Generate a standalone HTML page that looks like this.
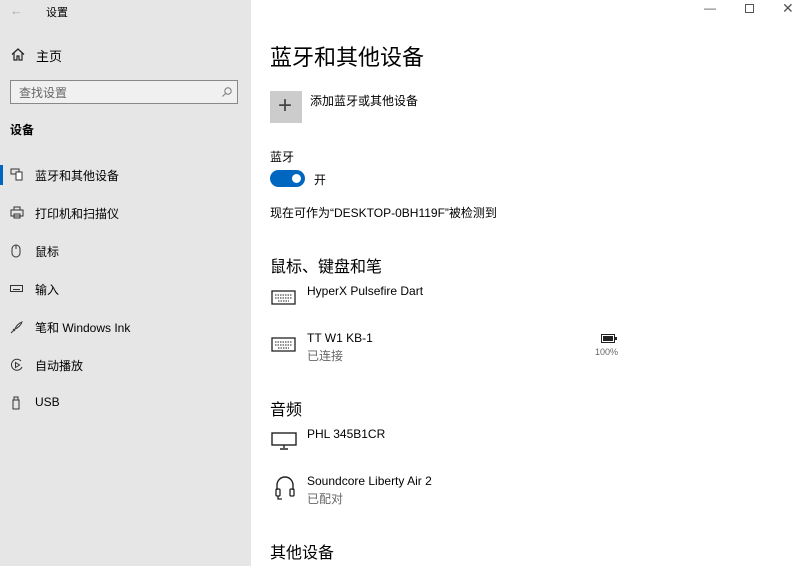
<!DOCTYPE html>
<html><head><meta charset="utf-8"><style>
*{margin:0;padding:0;box-sizing:border-box}
body{width:800px;height:566px;overflow:hidden;background:#fff;font-family:"Liberation Sans","Noto Sans CJK SC",sans-serif;color:#000;position:relative}
.side{position:absolute;left:0;top:0;width:251px;height:566px;background:#e6e6e6}
.a{position:absolute;white-space:nowrap}
.s{font-size:12px}
.m{font-size:12px}
.g{color:#666}
svg{position:absolute}
</style></head><body>
<div class="side">
 <div class="a" style="left:10px;top:3px;font-size:13px;color:#aaa">←</div>
 <div class="a s" style="left:46px;top:4px;font-size:11px">设置</div>
 <svg style="left:11px;top:48px" width="14" height="13" viewBox="0 0 14 13"><path d="M1 6.5L7 1l6 5.5M3 5v7h3V8h2v4h3V5" fill="none" stroke="#222" stroke-width="1.2"/></svg>
 <div class="a s" style="left:36px;top:46px;font-size:13px">主页</div>
 <div class="a" style="left:10px;top:80px;width:228px;height:24px;border:1px solid #888;background:#f0f0f0"></div>
 <div class="a s" style="left:19px;top:84px;color:#666">查找设置</div>
 <svg style="left:221px;top:86px" width="12" height="12" viewBox="0 0 12 12"><circle cx="7" cy="5" r="3.2" fill="none" stroke="#777"/><path d="M4.8 7.2L1.5 10.5" stroke="#777"/></svg>
 <div class="a" style="left:10px;top:121px;font-size:12px;font-weight:bold">设备</div>
 <div class="a" style="left:0;top:165px;width:3px;height:20px;background:#0067c0"></div>
 <svg style="left:10px;top:168px" width="14" height="13" viewBox="0 0 14 13"><rect x="1" y="1" width="8" height="5" fill="none" stroke="#333"/><rect x="6" y="4" width="6" height="8" fill="#fff" stroke="#333"/></svg>
 <div class="a s" style="left:35px;top:167px">蓝牙和其他设备</div>
 <svg style="left:10px;top:206px" width="14" height="13" viewBox="0 0 14 13"><path d="M4 4V1h6v3M1 4h12v6H1zM4 8h6v4H4z" fill="none" stroke="#333"/></svg>
 <div class="a s" style="left:35px;top:205px">打印机和扫描仪</div>
 <svg style="left:11px;top:244px" width="10" height="14" viewBox="0 0 10 14"><rect x="1" y="1" width="8" height="12" rx="4" fill="none" stroke="#333"/><path d="M5 1v4" stroke="#333"/></svg>
 <div class="a s" style="left:35px;top:243px">鼠标</div>
 <svg style="left:10px;top:285px" width="13" height="7" viewBox="0 0 13 7"><rect x=".5" y=".5" width="12" height="6" fill="none" stroke="#333"/><path d="M3 4.5h7" stroke="#333"/></svg>
 <div class="a s" style="left:35px;top:281px">输入</div>
 <svg style="left:10px;top:320px" width="14" height="14" viewBox="0 0 14 14"><path d="M1 13l4-4M5 9c3-1 6-4 7-7-3 1-6 4-7 7zM3 9c1 1 2 2 2 2" fill="none" stroke="#333"/></svg>
 <div class="a s" style="left:35px;top:319px">笔和 Windows Ink</div>
 <svg style="left:10px;top:358px" width="14" height="14" viewBox="0 0 14 14"><path d="M12 9A5.5 5.5 0 1 1 11 3" fill="none" stroke="#333"/><path d="M5.5 4.5v5l4-2.5z" fill="none" stroke="#333"/></svg>
 <div class="a s" style="left:35px;top:357px">自动播放</div>
 <svg style="left:12px;top:396px" width="8" height="14" viewBox="0 0 8 14"><rect x="1" y="4" width="6" height="9" fill="none" stroke="#333"/><rect x="2" y="1" width="4" height="3" fill="none" stroke="#333"/></svg>
 <div class="a s" style="left:35px;top:395px">USB</div>
</div>
<div class="a" style="left:704px;top:1px;font-size:12px;color:#555">—</div>
<div class="a" style="left:745px;top:4px;width:9px;height:9px;border:1px solid #555"></div>
<div class="a" style="left:782px;top:0px;font-size:14px;color:#555">✕</div>
<div class="a" style="left:270px;top:40px;font-size:22px">蓝牙和其他设备</div>
<div class="a" style="left:270px;top:91px;width:32px;height:32px;background:#ccc"></div>
<div class="a" style="left:278px;top:91px;font-size:24px;line-height:30px;color:#444;font-weight:200">+</div>
<div class="a m" style="left:310px;top:92px">添加蓝牙或其他设备</div>
<div class="a m" style="left:270px;top:148px">蓝牙</div>
<div class="a" style="left:270px;top:170px;width:35px;height:17px;border-radius:9px;background:#0067c0"></div>
<div class="a" style="left:292px;top:174px;width:9px;height:9px;border-radius:50%;background:#fff"></div>
<div class="a m" style="left:314px;top:171px">开</div>
<div class="a m" style="left:270px;top:204px">现在可作为“DESKTOP-0BH119F”被检测到</div>
<div class="a" style="left:270px;top:253px;font-size:16px">鼠标、键盘和笔</div>
<svg style="left:271px;top:290px" width="25" height="15" viewBox="0 0 25 15"><rect x="1" y="1" width="23" height="13" fill="none" stroke="#222" stroke-width="1.3"/><path d="M4 5h17M4 8h17M7 11h11" stroke="#222" stroke-dasharray="1.5 1"/></svg>
<div class="a m" style="left:307px;top:284px">HyperX Pulsefire Dart</div>
<svg style="left:271px;top:337px" width="25" height="15" viewBox="0 0 25 15"><rect x="1" y="1" width="23" height="13" fill="none" stroke="#222" stroke-width="1.3"/><path d="M4 5h17M4 8h17M7 11h11" stroke="#222" stroke-dasharray="1.5 1"/></svg>
<div class="a m" style="left:307px;top:331px">TT W1 KB-1</div>
<div class="a m g" style="left:307px;top:347px">已连接</div>
<svg style="left:601px;top:334px" width="16" height="9" viewBox="0 0 16 9"><rect x=".5" y=".5" width="13" height="8" fill="none" stroke="#222"/><rect x="2" y="2" width="10" height="5" fill="#222"/><rect x="14" y="3" width="2" height="3" fill="#222"/></svg>
<div class="a g" style="left:595px;top:347px;font-size:9px">100%</div>
<div class="a" style="left:270px;top:396px;font-size:16px">音频</div>
<svg style="left:271px;top:432px" width="26" height="18" viewBox="0 0 26 18"><rect x="1" y="1" width="24" height="12" fill="none" stroke="#222" stroke-width="1.4"/><path d="M13 13v3M9 17h8" stroke="#222" stroke-width="1.4"/></svg>
<div class="a m" style="left:307px;top:427px">PHL 345B1CR</div>
<svg style="left:274px;top:475px" width="22" height="28" viewBox="0 0 22 28"><path d="M3 15V10a8 8 0 0 1 16 0v5" fill="none" stroke="#222" stroke-width="1.4"/><rect x="2" y="14" width="4" height="7" rx="1" fill="none" stroke="#222" stroke-width="1.3"/><rect x="16" y="14" width="4" height="7" rx="1" fill="none" stroke="#222" stroke-width="1.3"/><path d="M4 21v3h4" fill="none" stroke="#222" stroke-width="1.3"/></svg>
<div class="a m" style="left:307px;top:474px">Soundcore Liberty Air 2</div>
<div class="a m g" style="left:307px;top:490px">已配对</div>
<div class="a" style="left:270px;top:539px;font-size:16px">其他设备</div>
</body></html>
